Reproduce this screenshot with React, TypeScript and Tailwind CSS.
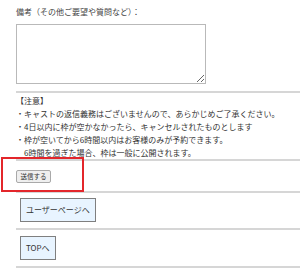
import React from "react";

const font = { fontFamily: '"Noto Sans CJK JP", "Noto Sans", sans-serif' };

function Hr() {
  return <div className="h-[2px] bg-[#d6d6d6]" />;
}

export default function App() {
  return (
    <div
      className="relative w-[300px] h-[269px] overflow-hidden bg-white pl-[16px] text-[#333]"
      style={font}
    >
      <div className="pt-[7px] text-[8px] leading-[10px] text-[#444]">
        備考（その他ご要望や質問など）：
      </div>
      <textarea
        className="mt-[7px] block w-[190px] h-[60px] resize border border-[#b9b9b9] bg-white"
        defaultValue=""
      />
      <div className="mt-[7px]">
        <Hr />
      </div>
      <div className="pt-[1px] text-[8px] leading-[13px] text-[#333]">
        <div>【注意】</div>
        <div>・キャストの返信義務はございませんので、あらかじめご了承ください。</div>
        <div>・4日以内に枠が空かなかったら、キャンセルされたものとします</div>
        <div>・枠が空いてから6時間以内はお客様のみが予約できます。</div>
        <div>　6時間を過ぎた場合、枠は一般に公開されます。</div>
      </div>
      <Hr />
      <div className="pt-[9px] pb-[8px]">
        <button className="flex h-[13px] w-[35px] items-center justify-center rounded-[2px] border border-[#a9a9a9] bg-[#efefef] text-[6.5px] leading-none text-[#333]">
          送信する
        </button>
      </div>
      <Hr />
      <div className="pl-[4px] pt-[5px] pb-[6px]">
        <button className="flex h-[24px] items-center border-[1.5px] border-[#7f7f7f] bg-[#e8f4ff] px-[5px] text-[8px] leading-none text-[#333]">
          ユーザーページへ
        </button>
      </div>
      <Hr />
      <div className="pl-[4px] pt-[6px] pb-[6px]">
        <button className="flex h-[24px] items-center border-[1.5px] border-[#7f7f7f] bg-[#e8f4ff] px-[5px] text-[8px] leading-none text-[#333]">
          TOPへ
        </button>
      </div>
      <Hr />
      <div className="pointer-events-none absolute left-[1px] top-[157px] h-[35px] w-[83px] border-2 border-[#e3262b]" />
    </div>
  );
}
